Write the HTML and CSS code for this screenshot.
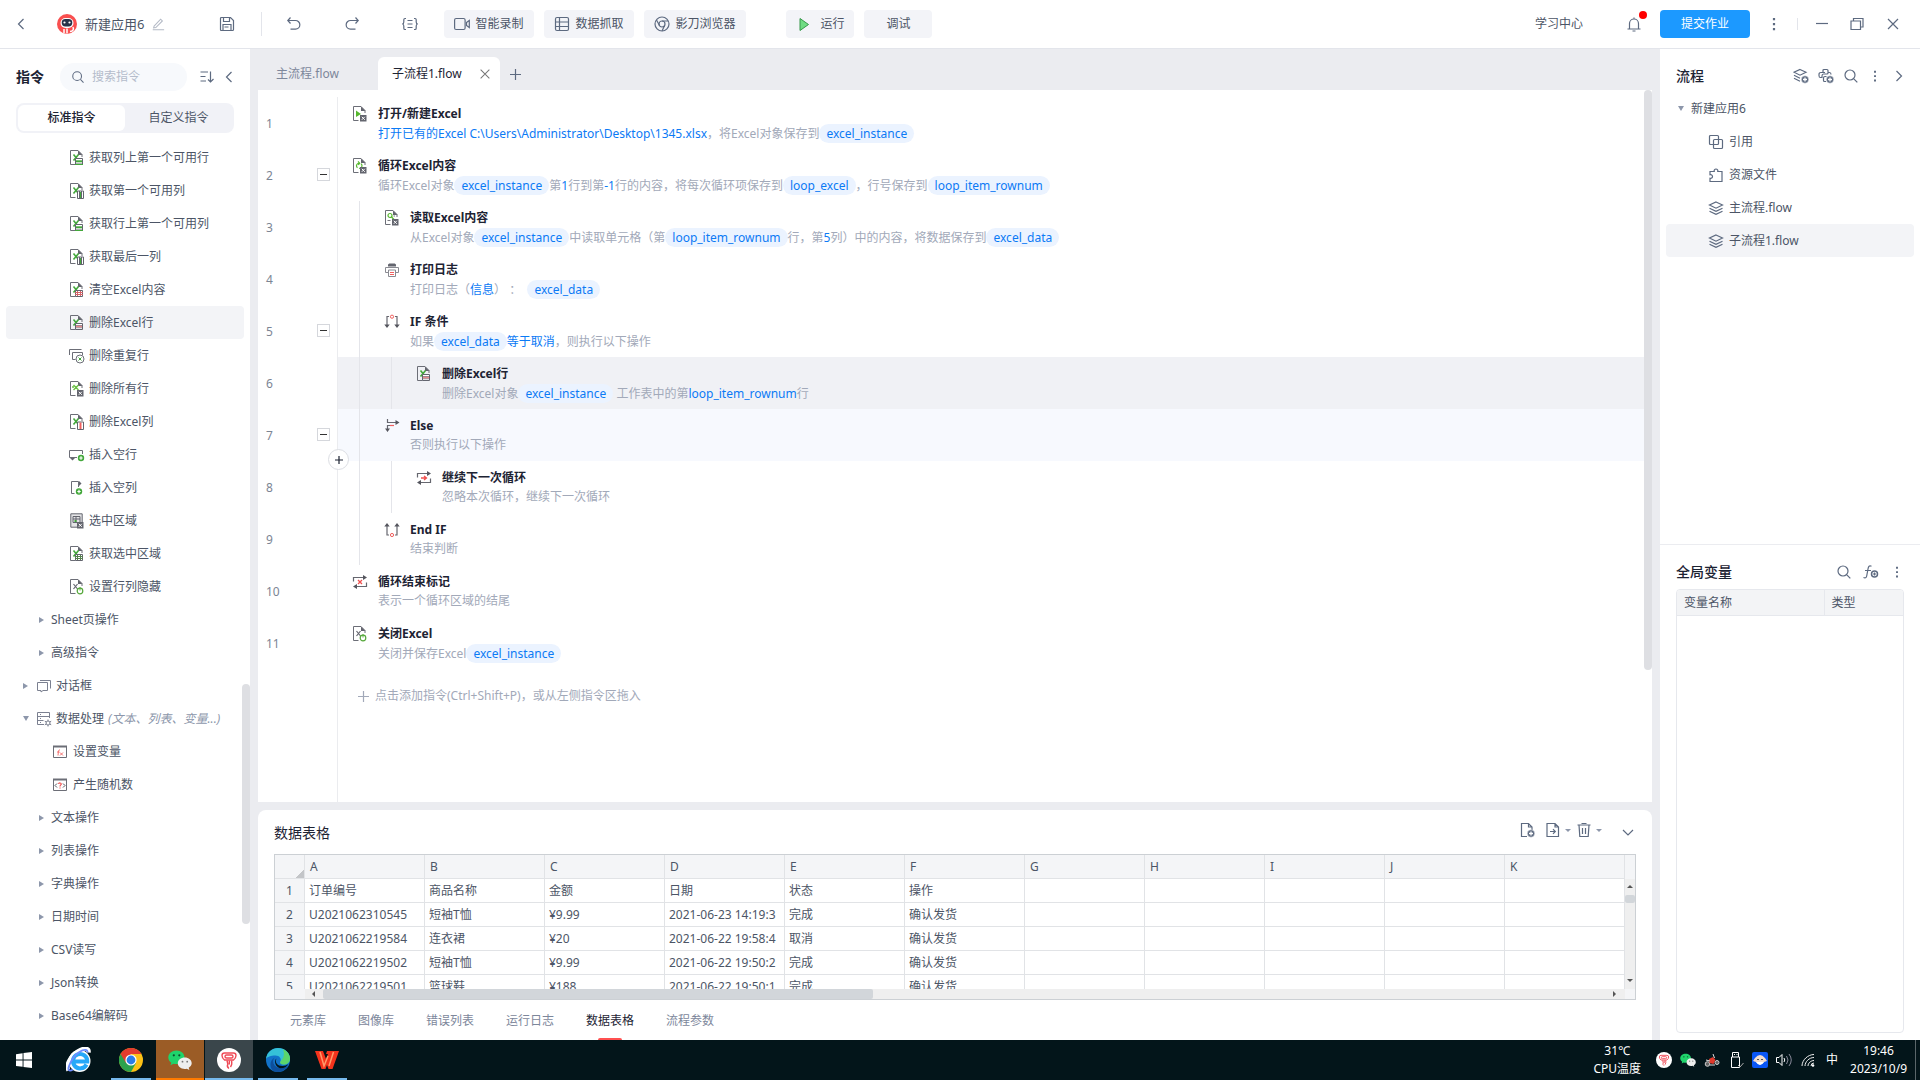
FILE: index.html
```html
<!DOCTYPE html>
<html lang="zh-CN">
<head>
  <meta charset="UTF-8" />
  <meta name="viewport" content="width=device-width, initial-scale=1.0"/>
  <title>新建应用6</title>
  <link rel="stylesheet" href="styles.css">
</head>
<body>
  <!-- Icon sprite -->
  <svg class="sprite" aria-hidden="true">
    <!-- excel documents, 14x16 -->
    <symbol id="doc" viewBox="0 0 14 16"><path d="M5.500 14.500H.5v-14H8l4 4V7" fill="none" stroke="#6c6e77"/><path d="M8 .5V5h4.500z" fill="#63656e"/></symbol>
    <symbol id="xl" viewBox="0 0 14 16"><use href="#doc"/><path d="M3.500 4.500l5 6M8.500 4.500l-5 6" stroke="#43a83b" stroke-width="1.600"/></symbol>
    <symbol id="xl-row" viewBox="0 0 14 16"><use href="#xl"/><path d="M5.500 8.500h7v5.500h-7z" fill="#fff" stroke="#63656e"/><path d="M6 11.300h6" stroke="#43a83b" stroke-width="2"/><path d="M5 14.500h8" stroke="#43a83b"/></symbol>
    <symbol id="xl-col" viewBox="0 0 14 16"><use href="#xl"/><path d="M7.500 8h6v7.500h-6zM9.500 8v7.500M11.500 8v7.500" fill="#fff" stroke="#63656e"/><path d="M10.500 9v6" stroke="#43a83b"/></symbol>
    <symbol id="xl-clear" viewBox="0 0 14 16"><use href="#xl"/><path d="M5.500 8.500h7v6h-7z" fill="#fff" stroke="#63656e"/><path d="M5 10.500h8M5 12.500h8M7.500 9v5M10.500 9v5" stroke="#d5656b"/></symbol>
    <symbol id="xl-delrow" viewBox="0 0 14 16"><use href="#xl"/><path d="M5.500 8.500h7v6h-7z" fill="#fff" stroke="#63656e"/><path d="M6 11.500h6" stroke="#e88a8c" stroke-width="2"/><path d="M5 10.500h8M5 12.800h8" stroke="#63656e" stroke-width=".6"/></symbol>
    <symbol id="xl-delcol" viewBox="0 0 14 16"><use href="#xl"/><path d="M7.500 8h6v7.500h-6z" fill="#fff" stroke="#63656e"/><path d="M10.500 8.500v6.500" stroke="#f0605f" stroke-width="2"/></symbol>
    <symbol id="xl-area" viewBox="0 0 14 16"><use href="#xl"/><path d="M5.500 8.500h7v6h-7z" fill="#fff" stroke="#63656e"/><path d="M5 10.500h8M5 12.500h8M7.500 9v5M10.500 9v5" stroke="#55814e"/></symbol>
    <symbol id="badge" viewBox="0 0 14 16"><path d="M7 9h6.500v6.500H7z" fill="#63656e"/><path d="M8.800 10.800l3 3M11.800 10.800l-3 3" stroke="#fff"/></symbol>
    <symbol id="xl-delall" viewBox="0 0 14 16"><use href="#doc"/><path d="M3.500 4l5 5M8.500 4l-5 5M2 6h2" stroke="#6bc046" stroke-width="1.400"/><use href="#badge"/></symbol>
    <symbol id="xl-open" viewBox="0 0 14 16"><use href="#doc"/><path d="M3 4.500l5 3.500-5 3z" fill="#56b82e"/><use href="#badge"/></symbol>
    <symbol id="xl-loop" viewBox="0 0 14 16"><use href="#doc"/><path d="M4.500 9.800a2.500 2.500 0 0 1 .5-4.300l1.500-.3M5 3.500l1.700 1.700L5.300 7M8 5.700a2.500 2.500 0 0 1-.5 4.300l-1.500.3" fill="none" stroke="#56b82e" stroke-width="1.200"/><use href="#badge"/></symbol>
    <symbol id="xl-read" viewBox="0 0 14 16"><use href="#doc"/><circle cx="5" cy="5.500" r="2" fill="none" stroke="#56b82e" stroke-width="1.200"/><path d="M6.500 7L9 9.500" stroke="#56b82e" stroke-width="1.200"/><path d="M2.500 10.500h3M8.500 6H10" stroke="#77787f"/><use href="#badge"/></symbol>
    <symbol id="xl-power" viewBox="0 0 14 16"><use href="#doc"/><path d="M3.500 5l4 5M7.500 5l-4 5" stroke="#63656e" stroke-width="1.200"/><circle cx="10" cy="12" r="2.800" fill="#fff" stroke="#56a83b" stroke-width="1.200"/><path d="M10 8v3.500" stroke="#56a83b"/></symbol>
    <symbol id="xl-select" viewBox="0 0 14 16"><path d="M.8.800h11.400v13.400H.8z" fill="#e4e4e6" stroke="#63656e"/><path d="M3 3.500h7v6H3zM3 6h7M6 3.500v6" fill="none" stroke="#63656e"/><path d="M4.500 7h2v2h-2z" fill="#43a83b"/><use href="#badge"/></symbol>
    <symbol id="xl-dup" viewBox="0 0 16 16"><path d="M.5 7V1.500h12M6.500 11.500H3.500v-7h10V7" fill="none" stroke="#6c6e77"/><circle cx="11" cy="11" r="4" fill="#fff" stroke="#6c6e77"/><path d="M9.500 9.500l3 3M12.500 9.500l-3 3" stroke="#43a83b"/></symbol>
    <symbol id="ins-row" viewBox="0 0 16 16"><path d="M8 10.500H.5v-7h13V7" fill="none" stroke="#6c6e77"/><path d="M1 11h5l-2.500 2.500z" fill="#63656e"/><circle cx="12" cy="11" r="3.200" fill="#43a83b"/><path d="M12 9.300v3.400M10.300 11h3.400" stroke="#fff" stroke-width="1.200"/></symbol>
    <symbol id="ins-col" viewBox="0 0 16 16"><path d="M5.500 13.500h-3v-12h7V7" fill="none" stroke="#6c6e77"/><path d="M10 1l2.500 2.500L10 6z" fill="#63656e"/><circle cx="10" cy="11.500" r="3.200" fill="#43a83b"/><path d="M10 9.800v3.400M8.300 11.500h3.400" stroke="#fff" stroke-width="1.200"/></symbol>
    <!-- flow commands -->
    <symbol id="printer" viewBox="0 0 16 16"><path d="M4 4.500V3C4 2 5 1.500 6 1.500h4c1 0 2 .5 2 1.500v1.500z" fill="#63656e"/><path d="M4 10.500H1.500v-5h13v5H12" fill="none" stroke="#8a8b92"/><path d="M4.500 8h7v6.500h-7z" fill="#fff" stroke="#8a8b92"/><path d="M6 10.500h4M6 12.500h4" stroke="#f0605f"/></symbol>
    <symbol id="if" viewBox="0 0 16 16"><path d="M5 2.500H3V11M11 2.500h2V11" fill="none" stroke="#66676f" stroke-width="1.200"/><path d="M.3 10.500h5.400L3 14zM10.300 10.500h5.400L13 14z" fill="#55565e"/><circle cx="8" cy="2.700" r="1.600" fill="none" stroke="#f0605f"/></symbol>
    <symbol id="endif" viewBox="0 0 16 16"><path d="M5 13H3V4M11 13h2V4" fill="none" stroke="#66676f" stroke-width="1.200"/><path d="M.3 4.500h5.400L3 1zM10.300 4.500h5.400L13 1z" fill="#55565e"/><circle cx="8" cy="13" r="1.600" fill="none" stroke="#f0605f"/></symbol>
    <symbol id="else" viewBox="0 0 16 16"><path d="M3.500 1v3.500h9M6 7.500H3.500V12" fill="none" stroke="#66676f" stroke-width="1.200"/><path d="M11.500 2l4 2.500-4 2.500zM1 10.500h5L3.500 14z" fill="#55565e"/><path d="M6 7.500h4" stroke="#f0605f" stroke-width="1.200"/></symbol>
    <symbol id="loop" viewBox="0 0 16 16"><path d="M1.500 7.500v-4h10M14.500 8.500v4h-10" fill="none" stroke="#66676f" stroke-width="1.200"/><path d="M11 1l4 2.500L11 6zM5 10l-4 2.500L5 15z" fill="#55565e"/></symbol>
    <symbol id="next" viewBox="0 0 16 16"><use href="#loop"/><path d="M5 8h5M8 6l2.500 2L8 10" fill="none" stroke="#f0504f" stroke-width="1.300"/></symbol>
    <symbol id="endloop" viewBox="0 0 16 16"><use href="#loop"/><path d="M6 6l4 4M10 6l-4 4" stroke="#f0504f" stroke-width="1.300"/></symbol>
    <symbol id="dialog" viewBox="0 0 16 16"><path d="M1.500 4.500h10v8H7l-2 1.500v-1.500H1.500zM4 2.500h10.500v8" fill="none" stroke="#7b8090"/></symbol>
    <symbol id="data" viewBox="0 0 16 16"><path d="M8 13.500H1.500v-12h12V7M1.500 5.500h12M1.500 9.500h6M4 3.500h1M4 7.500h1M4 11.500h1" fill="none" stroke="#7b8090"/><circle cx="12" cy="12" r="2" fill="#fff" stroke="#7b8090"/><path d="M12 8.500V10M12 14v1.500M8.800 10.200l1.500.8M13.800 13l1.400.8M8.800 13.800l1.500-.8M13.800 11l1.400-.8" stroke="#7b8090"/></symbol>
    <symbol id="setvar" viewBox="0 0 16 16"><path d="M1.500 2.500h13v11h-13z" fill="none" stroke="#6c6e77"/><path d="M1 2.500h14" stroke="#6c6e77" stroke-width="2"/><path d="M8 6c-1.500-.5-1.500 1-2 5.500M5 8h2.500M8 8.500l3 3M11 8.500l-3 3" fill="none" stroke="#f0605f" stroke-width=".9"/></symbol>
    <symbol id="random" viewBox="0 0 16 16"><path d="M1.500 2.500h13v11h-13z" fill="none" stroke="#6c6e77"/><path d="M1 2.500h14" stroke="#6c6e77" stroke-width="2"/><path d="M5 6.500L3 8.500l2 2M11 6.500l2 2-2 2" fill="none" stroke="#55565e"/><path d="M6.500 7c.3-1.500 3-1.300 2.700.3C9 8 8 8 8 9.500M8 10.500v1" fill="none" stroke="#f0504f" stroke-width="1.200"/></symbol>
    <!-- line icons -->
    <symbol id="left" viewBox="0 0 16 16"><path d="M10.500 3L5.500 8l5 5"/></symbol>
    <symbol id="right" viewBox="0 0 16 16"><path d="M5.500 3l5 5-5 5"/></symbol>
    <symbol id="down" viewBox="0 0 16 16"><path d="M3 6l5 5 5-5"/></symbol>
    <symbol id="plus" viewBox="0 0 16 16"><path d="M8.500 3v11M3 8.500h11"/></symbol>
    <symbol id="plus-sm" viewBox="0 0 16 16"><path d="M8 4v8M4 8h8"/></symbol>
    <symbol id="close" viewBox="0 0 16 16"><path d="M3 3l10 10M13 3L3 13"/></symbol>
    <symbol id="search" viewBox="0 0 16 16"><circle cx="7" cy="7" r="5"/><path d="M10.800 10.800l3.500 3.500"/></symbol>
    <symbol id="more" viewBox="0 0 16 16"><path d="M8 2v2.200M8 7v2.200M8 12v2.200" stroke-width="2.200"/></symbol>
    <symbol id="edit" viewBox="0 0 16 16"><path d="M3.500 10.500l7.500-8 2 2-7.500 7.500-2.500.5zM2 14.500h13"/></symbol>
    <symbol id="save" viewBox="0 0 16 16"><path d="M1.500 2.500q0-1 1-1h9l3 3v9q0 1-1 1h-11q-1 0-1-1zM4.500 1.500v4h6v-4M4 14.500v-6h8v6M5.500 11h4"/></symbol>
    <symbol id="undo" viewBox="0 0 16 16"><path d="M4.500 1.500L1.800 4.500l2.700 3M2 4.500h7.500a4.300 4.300 0 0 1 0 8.700H4.500"/></symbol>
    <symbol id="redo" viewBox="0 0 16 16"><path d="M11.500 1.500l2.700 3-2.700 3M14 4.500H6.500a4.300 4.300 0 0 0 0 8.700h5"/></symbol>
    <symbol id="braces" viewBox="0 0 18 16"><path d="M5 2.500H4q-1.200 0-1.200 1.300V6q0 2-1.600 2 1.600 0 1.600 2v2.200q0 1.300 1.200 1.300h1M13 2.500h1q1.200 0 1.200 1.300V6q0 2 1.600 2-1.600 0-1.600 2v2.200q0 1.300-1.200 1.300h-1M6.500 4.500h5M6.500 8h5M6.500 11.500h5"/></symbol>
    <symbol id="video" viewBox="0 0 16 16"><rect x=".6" y="2.500" width="10.500" height="11" rx="1.500"/><path d="M12.500 6.500l2.800-2v7l-2.800-2z"/></symbol>
    <symbol id="grid" viewBox="0 0 16 16"><rect x="1.500" y="1.500" width="13" height="13" rx="1.500"/><path d="M5.500 1.500v13M1.500 6h13M1.500 10.500h13"/></symbol>
    <symbol id="browser" viewBox="0 0 16 16"><circle cx="8" cy="8" r="7"/><circle cx="8" cy="8" r="3"/><path d="M2.500 4l3 5.500M14 5H8M10.600 9.500L8 15"/></symbol>
    <symbol id="bell" viewBox="0 0 16 16"><path d="M1.500 13h13M3.500 13V7.500a4.500 4.500 0 0 1 9 0V13M8 3V1.500M6.500 15h3"/></symbol>
    <symbol id="restore" viewBox="0 0 16 16"><path d="M2 5h9.500v8.500H2zM4.500 5V2.500H14V11h-2.500"/></symbol>
    <symbol id="sort" viewBox="0 0 16 16"><path d="M1.500 3H9M1.500 7.500h5M1.500 12H7M11.500 2.500V13M9 10.500l2.500 2.500 3-3"/></symbol>
    <symbol id="layers" viewBox="0 0 16 16"><path d="M8 2l6.500 3L8 8.200 1.500 5zM1.500 8.200L8 11.400l6.500-3.200M1.500 11.200L8 14.400l6.500-3.200"/></symbol>
    <symbol id="dot-plus" viewBox="0 0 16 16"><circle cx="12" cy="11.500" r="3.700" fill="#5d6a80" stroke="#fff" stroke-width=".5"/><path d="M12 9.500v4M10 11.500h4" stroke="#fff" stroke-width="1.300"/></symbol>
    <symbol id="layers-add" viewBox="0 0 16 16"><path d="M7 1.500l6 2.700-6 3-6-3zM1 7.200l6 3M1 10.200l6 3"/><use href="#dot-plus"/></symbol>
    <symbol id="python-add" viewBox="0 0 16 16"><path d="M5 4V2.500q0-1 1-1h3q1 0 1 1V5q0 1-1 1H5.500Q4 6 4 8v1.500H2.500q-1.500 0-1.500-2v-1q0-2 2-2h4M10 4.500h1.500q1.500 0 1.500 2M8.500 8.500H7q-1.500 0-1.500 1.500v2.500q0 1 1 1H8"/><use href="#dot-plus"/></symbol>
    <symbol id="quote" viewBox="0 0 16 16"><rect x="1.500" y="1.500" width="9" height="9" rx="1"/><rect x="5.500" y="5.500" width="9" height="9" rx="1"/></symbol>
    <symbol id="puzzle" viewBox="0 0 16 16"><path d="M2 4.500h4.200a1.900 1.900 0 1 1 3.600 0H14v10H2v-3.200a1.900 1.900 0 1 0 0-3.600z"/></symbol>
    <symbol id="fx" viewBox="0 0 18 16"><path d="M9.500 2.200C7 .8 6.300 3 5.800 6L4.700 12c-.4 2-1.700 2.300-3.200 1.500M3 6.500h6"/><circle cx="12.500" cy="10" r="3" stroke-width="1.500"/><path d="M12.500 8.500v3M11 10h3"/></symbol>
    <symbol id="file-add" viewBox="0 0 16 16"><path d="M8 14.500H2.500v-13h7l3.500 3.500v3M9.500 1.500V5H13"/><use href="#dot-plus"/></symbol>
    <symbol id="file-out" viewBox="0 0 16 16"><path d="M2 1.500h8l3.500 3.500v9.500H2zM10 1.500V5h3.500M5 9.500h5M8 7.200l2.300 2.300L8 11.800"/></symbol>
    <symbol id="trash" viewBox="0 0 16 16"><path d="M1.500 3h13M5.500 1.500h5M3 3l.8 11.500h8.400L13 3M6.500 6v6M9.500 6v6"/></symbol>
    <!-- taskbar -->
    <symbol id="robot" viewBox="0 0 24 24"><circle cx="12" cy="12" r="12" fill="#fff"/><path d="M7.500 5h9q2.500 0 2.500 2.500T16.500 12h-9Q5 10 5 7.500T7.500 5z" fill="none" stroke="#ef4b57" stroke-width="1.400"/><rect x="8" y="7" width="8" height="3" rx="1.500" fill="none" stroke="#ef4b57" stroke-width="1.400"/><path d="M10 12.500l.8 3.500q-1.300 3 1.200 4.500M14.500 12.500q1 4-1 6.500M12.300 12.500v4" fill="none" stroke="#ef4b57" stroke-width="1.400"/></symbol>
    <symbol id="wechat" viewBox="0 0 24 24"><path d="M8.500 2.500C4 2.500.3 5.500.3 9.500c0 2.200 1.200 4 3 5.300l-.8 2.500 3-1.500c5.500 1.200 11-1.500 11-6.300 0-4-3.500-7-8-7z" fill="#1fd46b"/><circle cx="5.800" cy="7.300" r="1.100" fill="#0b4e2b"/><circle cx="11.300" cy="7.300" r="1.100" fill="#0b4e2b"/><path d="M16.800 9.500c-4 0-7 2.600-7 5.800 0 4 4.500 6.500 9 5.400l2.600 1.300-.7-2.200c1.800-1.100 3-2.600 3-4.500 0-3.200-3-5.800-6.900-5.800z" fill="#eee"/><circle cx="14.500" cy="13.700" r=".9" fill="#777"/><circle cx="19.200" cy="13.700" r=".9" fill="#777"/></symbol>
  </svg>

  <header class="topbar">
    <button class="icon-btn back" aria-label="返回"><svg class="line s16"><use href="#left"/></svg></button>
    <svg class="app-logo" viewBox="0 0 20 20"><circle cx="10" cy="10" r="10" fill="#f94f4f"/><rect x="3.500" y="4" width="13" height="10" rx="5" fill="#fff"/><rect x="4.700" y="5" width="10.600" height="7.500" rx="3.700" fill="#26334a"/><circle cx="7.500" cy="8.500" r="1.100" fill="#fff"/><circle cx="12.500" cy="8.500" r="1.100" fill="#fff"/><path d="M7 15v4M10 14.500v5M16 13q1.500 4-3 4.500" stroke="#fff" stroke-width="1.500" fill="none"/></svg>
    <h1>新建应用6</h1>
    <button class="icon-btn edit" aria-label="重命名"><svg class="line s14 pale"><use href="#edit"/></svg></button>
    <button class="icon-btn save" aria-label="保存"><svg class="line s16"><use href="#save"/></svg></button>
    <span class="divider tall"></span>
    <button class="icon-btn undo" aria-label="撤销"><svg class="line s16"><use href="#undo"/></svg></button>
    <button class="icon-btn redo" aria-label="重做"><svg class="line s16"><use href="#redo"/></svg></button>
    <button class="icon-btn braces" aria-label="代码"><svg class="line s18"><use href="#braces"/></svg></button>
    <div class="tools">
      <button class="tool"><svg class="line s16"><use href="#video"/></svg>智能录制</button>
      <button class="tool"><svg class="line s16"><use href="#grid"/></svg>数据抓取</button>
      <button class="tool"><svg class="line s16"><use href="#browser"/></svg>影刀浏览器</button>
    </div>
    <div class="tools run">
      <button class="tool"><svg class="s16" viewBox="0 0 16 16"><path d="M4 2.500l8.500 6L4 14.500z" fill="#6fdc83" stroke="#36984a"/></svg>运行</button>
      <button class="tool">调试</button>
    </div>
    <a class="learn" href="#">学习中心</a>
    <button class="icon-btn bell" aria-label="通知"><svg class="line s16"><use href="#bell"/></svg><span class="dot"></span></button>
    <button class="submit">提交作业</button>
    <button class="icon-btn more" aria-label="更多"><svg class="line s16"><use href="#more"/></svg></button>
    <span class="divider"></span>
    <div class="window-btns">
      <button class="icon-btn" aria-label="最小化"><svg class="line s14" viewBox="0 0 14 14"><path d="M1 6.500h12"/></svg></button>
      <button class="icon-btn" aria-label="还原"><svg class="line s16"><use href="#restore"/></svg></button>
      <button class="icon-btn" aria-label="关闭"><svg class="line s16"><use href="#close"/></svg></button>
    </div>
  </header>

  <div class="workspace">
    <aside class="commands">
      <div class="commands-head">
        <h2>指令</h2>
        <label class="search"><svg class="line s14"><use href="#search"/></svg><input type="text" placeholder="搜索指令" aria-label="搜索指令"></label>
        <button class="icon-btn" aria-label="排序"><svg class="line s16"><use href="#sort"/></svg></button>
        <button class="icon-btn" aria-label="收起"><svg class="line s16"><use href="#left"/></svg></button>
      </div>
      <div class="segment">
        <button class="active">标准指令</button>
        <button>自定义指令</button>
      </div>
      <ul class="tree">
        <li class="leaf"><svg><use href="#xl-row"/></svg>获取列上第一个可用行</li>
        <li class="leaf"><svg><use href="#xl-col"/></svg>获取第一个可用列</li>
        <li class="leaf"><svg><use href="#xl-row"/></svg>获取行上第一个可用列</li>
        <li class="leaf"><svg><use href="#xl-col"/></svg>获取最后一列</li>
        <li class="leaf"><svg><use href="#xl-clear"/></svg>清空Excel内容</li>
        <li class="leaf selected"><svg><use href="#xl-delrow"/></svg>删除Excel行</li>
        <li class="leaf"><svg><use href="#xl-dup"/></svg>删除重复行</li>
        <li class="leaf"><svg><use href="#xl-delall"/></svg>删除所有行</li>
        <li class="leaf"><svg><use href="#xl-delcol"/></svg>删除Excel列</li>
        <li class="leaf"><svg><use href="#ins-row"/></svg>插入空行</li>
        <li class="leaf"><svg><use href="#ins-col"/></svg>插入空列</li>
        <li class="leaf"><svg><use href="#xl-select"/></svg>选中区域</li>
        <li class="leaf"><svg><use href="#xl-area"/></svg>获取选中区域</li>
        <li class="leaf"><svg><use href="#xl-power"/></svg>设置行列隐藏</li>
        <li class="group">Sheet页操作</li>
        <li class="group">高级指令</li>
        <li class="root"><svg><use href="#dialog"/></svg>对话框</li>
        <li class="root open"><svg><use href="#data"/></svg>数据处理<em>(文本、列表、变量...)</em></li>
        <li class="item"><svg><use href="#setvar"/></svg>设置变量</li>
        <li class="item"><svg><use href="#random"/></svg>产生随机数</li>
        <li class="group">文本操作</li>
        <li class="group">列表操作</li>
        <li class="group">字典操作</li>
        <li class="group">日期时间</li>
        <li class="group">CSV读写</li>
        <li class="group">Json转换</li>
        <li class="group">Base64编解码</li>
      </ul>
      <span class="side-thumb"></span>
    </aside>

    <main class="center">
      <nav class="tabs">
        <button class="tab">主流程.flow</button>
        <button class="tab active">子流程1.flow<svg class="line s14"><use href="#close"/></svg></button>
        <button class="icon-btn" aria-label="新建流程"><svg class="line s16"><use href="#plus"/></svg></button>
      </nav>

      <section class="canvas">
        <div class="flow">
          <div class="step">
            <div class="gutter">1</div>
            <svg><use href="#xl-open"/></svg>
            <div class="text"><h3>打开/新建Excel</h3><p class="wide"><b>打开已有的Excel C:\Users\Administrator\Desktop\1345.xlsx</b>，将Excel对象保存到<span class="chip">excel_instance</span></p></div>
          </div>
          <div class="step">
            <div class="gutter">2<button class="fold" aria-label="折叠"></button></div>
            <svg><use href="#xl-loop"/></svg>
            <div class="text"><h3>循环Excel内容</h3><p class="wide">循环Excel对象<span class="chip">excel_instance</span>第<b>1</b>行到第<b>-1</b>行的内容，将每次循环项保存到<span class="chip">loop_excel</span>，行号保存到<span class="chip">loop_item_rownum</span></p></div>
          </div>
          <div class="step">
            <div class="gutter">3</div><i class="guide"></i>
            <svg><use href="#xl-read"/></svg>
            <div class="text"><h3>读取Excel内容</h3><p class="wide">从Excel对象<span class="chip">excel_instance</span>中读取单元格（第<span class="chip">loop_item_rownum</span>行，第<b>5</b>列）中的内容，将数据保存到<span class="chip">excel_data</span></p></div>
          </div>
          <div class="step">
            <div class="gutter">4</div><i class="guide"></i>
            <svg><use href="#printer"/></svg>
            <div class="text"><h3>打印日志</h3><p class="wide">打印日志（<b>信息</b>） ：  <span class="chip">excel_data</span></p></div>
          </div>
          <div class="step">
            <div class="gutter">5<button class="fold" aria-label="折叠"></button></div><i class="guide"></i>
            <svg><use href="#if"/></svg>
            <div class="text"><h3>IF 条件</h3><p class="wide">如果<span class="chip">excel_data</span><b>等于取消</b>，则执行以下操作</p></div>
          </div>
          <div class="step selected">
            <div class="gutter">6</div><i class="guide"></i><i class="guide"></i>
            <svg><use href="#xl-delrow"/></svg>
            <div class="text"><h3>删除Excel行</h3><p class="wide">删除Excel对象<span class="chip">excel_instance</span> 工作表中的第<b>loop_item_rownum</b>行</p></div>
          </div>
          <div class="step hover">
            <div class="gutter">7<button class="fold" aria-label="折叠"></button></div><i class="guide"></i>
            <svg><use href="#else"/></svg>
            <div class="text"><h3>Else</h3><p>否则执行以下操作</p></div>
            <button class="insert" aria-label="插入指令"><svg class="line s16"><use href="#plus-sm"/></svg></button>
          </div>
          <div class="step">
            <div class="gutter">8</div><i class="guide"></i><i class="guide"></i>
            <svg><use href="#next"/></svg>
            <div class="text"><h3>继续下一次循环</h3><p>忽略本次循环，继续下一次循环</p></div>
          </div>
          <div class="step">
            <div class="gutter">9</div><i class="guide"></i>
            <svg><use href="#endif"/></svg>
            <div class="text"><h3>End IF</h3><p>结束判断</p></div>
          </div>
          <div class="step">
            <div class="gutter">10</div>
            <svg><use href="#endloop"/></svg>
            <div class="text"><h3>循环结束标记</h3><p>表示一个循环区域的结尾</p></div>
          </div>
          <div class="step">
            <div class="gutter">11</div>
            <svg><use href="#xl-power"/></svg>
            <div class="text"><h3>关闭Excel</h3><p class="wide">关闭并保存Excel<span class="chip">excel_instance</span></p></div>
          </div>
          <div class="step rest">
            <div class="gutter"></div>
            <button class="add"><svg class="line s16"><use href="#plus"/></svg>点击添加指令(Ctrl+Shift+P)，或从左侧指令区拖入</button>
          </div>
        </div>
        <div class="canvas-scroll"></div>
      </section>

      <section class="panel">
        <div class="panel-head">
          <h2>数据表格</h2>
          <button class="icon-btn" aria-label="新增"><svg class="line s16"><use href="#file-add"/></svg></button>
          <button class="icon-btn drop" aria-label="导出"><svg class="line s16"><use href="#file-out"/></svg></button>
          <button class="icon-btn drop" aria-label="清空"><svg class="line s16"><use href="#trash"/></svg></button>
          <button class="icon-btn fold-panel" aria-label="收起"><svg class="line s16"><use href="#down"/></svg></button>
        </div>
        <div class="sheet">
          <div class="sheet-body">
            <table>
              <thead>
                <tr><th class="corner"></th><th>A</th><th>B</th><th>C</th><th>D</th><th>E</th><th>F</th><th>G</th><th>H</th><th>I</th><th>J</th><th>K</th></tr>
              </thead>
              <tbody>
                <tr><th>1</th><td>订单编号</td><td>商品名称</td><td>金额</td><td>日期</td><td>状态</td><td>操作</td><td></td><td></td><td></td><td></td><td></td></tr>
                <tr><th>2</th><td>U2021062310545</td><td>短袖T恤</td><td>¥9.99</td><td>2021-06-23 14:19:3</td><td>完成</td><td>确认发货</td><td></td><td></td><td></td><td></td><td></td></tr>
                <tr><th>3</th><td>U2021062219584</td><td>连衣裙</td><td>¥20</td><td>2021-06-22 19:58:4</td><td>取消</td><td>确认发货</td><td></td><td></td><td></td><td></td><td></td></tr>
                <tr><th>4</th><td>U2021062219502</td><td>短袖T恤</td><td>¥9.99</td><td>2021-06-22 19:50:2</td><td>完成</td><td>确认发货</td><td></td><td></td><td></td><td></td><td></td></tr>
                <tr><th>5</th><td>U2021062219501</td><td>篮球鞋</td><td>¥188</td><td>2021-06-22 19:50:1</td><td>完成</td><td>确认发货</td><td></td><td></td><td></td><td></td><td></td></tr>
              </tbody>
            </table>
          </div>
          <div class="vscroll"><i class="arrow up"></i><span class="thumb"></span><i class="arrow dn"></i></div>
          <div class="hscroll"><i class="arrow lt"></i><span class="thumb"></span><i class="arrow rt"></i></div>
        </div>
        <nav class="panel-tabs">
          <button>元素库</button>
          <button>图像库</button>
          <button>错误列表</button>
          <button>运行日志</button>
          <button class="active">数据表格</button>
          <button>流程参数</button>
        </nav>
      </section>
    </main>

    <aside class="right">
      <section class="files">
        <div class="right-head">
          <h2>流程</h2>
          <button class="icon-btn" aria-label="新建流程"><svg class="line s16"><use href="#layers-add"/></svg></button>
          <button class="icon-btn" aria-label="新建代码"><svg class="line s16"><use href="#python-add"/></svg></button>
          <button class="icon-btn" aria-label="搜索"><svg class="line s16"><use href="#search"/></svg></button>
          <button class="icon-btn" aria-label="更多"><svg class="line s14"><use href="#more"/></svg></button>
          <button class="icon-btn" aria-label="收起"><svg class="line s16"><use href="#right"/></svg></button>
        </div>
        <ul class="tree">
          <li class="project open">新建应用6</li>
          <li class="file"><svg class="line"><use href="#quote"/></svg>引用</li>
          <li class="file"><svg class="line"><use href="#puzzle"/></svg>资源文件</li>
          <li class="file"><svg class="line"><use href="#layers"/></svg>主流程.flow</li>
          <li class="file selected"><svg class="line"><use href="#layers"/></svg>子流程1.flow</li>
        </ul>
      </section>
      <section class="vars">
        <div class="right-head">
          <h2>全局变量</h2>
          <button class="icon-btn" aria-label="搜索"><svg class="line s16"><use href="#search"/></svg></button>
          <button class="icon-btn" aria-label="新建变量"><svg class="line s18"><use href="#fx"/></svg></button>
          <button class="icon-btn" aria-label="更多"><svg class="line s14"><use href="#more"/></svg></button>
        </div>
        <div class="var-box">
          <table>
            <thead><tr><th>变量名称</th><th>类型</th></tr></thead>
          </table>
        </div>
      </section>
    </aside>
  </div>

  <footer class="taskbar">
    <button class="app start" aria-label="开始"><svg class="s16" viewBox="0 0 16 16"><path d="M0 2.200l6.600-1v6.300H0zM7.500 1L16 0v7.500H7.500zM0 8.500h6.600v6.300L0 14zM7.500 8.500H16V16l-8.500-1z" fill="#fff"/></svg></button>
    <button class="app ie" aria-label="IE"><svg class="s26" viewBox="0 0 26 26"><path d="M2.500 23C-1 19 5 9 12 4.500s11-3 10.500 1" fill="none" stroke="#fff" stroke-width="4.500"/><circle cx="13.500" cy="14" r="11" fill="#fff"/><path d="M20.500 17.500a7.200 7.200 0 1 1 .8-3H8" fill="none" stroke="#27a8f8" stroke-width="4"/><path d="M7 22.500c-4 2.500-5.500.5-4-3.500S8 8.500 13 5.200s9-3 8.500.3" fill="none" stroke="#6d8dff" stroke-width="1.800"/></svg></button>
    <button class="app on" aria-label="Chrome"><svg class="s24" viewBox="0 0 24 24"><circle cx="12" cy="12" r="12" fill="#fbc116"/><path d="M12 12L1.600 6A12 12 0 0 0 12 24l5-9z" fill="#2ba24c"/><path d="M1.600 6a12 12 0 0 1 20.800 0H12L7 15z" fill="#e33b2e"/><circle cx="12" cy="12" r="5.600" fill="#fff"/><circle cx="12" cy="12" r="4.400" fill="#2a7de9"/></svg></button>
    <button class="app on alert" aria-label="微信"><svg class="s24"><use href="#wechat"/></svg></button>
    <button class="app on current" aria-label="影刀"><svg class="s24"><use href="#robot"/></svg></button>
    <button class="app on" aria-label="Edge"><svg class="s24" viewBox="0 0 24 24"><circle cx="12" cy="12" r="12" fill="#1273c9"/><path d="M0 11C1 4 6 0 12 0c7 0 12 5 12 10.500 0 4-3 6-6.500 6-3 0-4-1.500-3-3 1-3-1-6-5-6C5 7.500 1 9 0 11z" fill="#35c1d8"/><path d="M17 1.200c4.500 2 7 5.500 7 9.300 0 4-3 6-6.500 6-3 0-4-1.500-3-3 1.500-2 5-5 2.500-12.300z" fill="#5bd66b"/><path d="M9 9.500c-3.500 3-2 9 4 10.500 3.500.8 7-.5 9-2-3 5-9 7-13.500 5.500C3 21 3 12 9 9.500z" fill="#0d4f9c"/><path d="M10.500 10.500c-2 4 1 7.500 6 7.500 2.500 0 4.500-.8 6-2-1.500 3-5 4.500-8.500 4.200C9.500 19 7.500 13 10.500 10.500z" fill="#03151a"/></svg></button>
    <button class="app on" aria-label="WPS"><svg class="s24" viewBox="0 0 24 24"><path d="M0 3h8l3 8 2-5h-2l1-3h12l-6.500 18h-4L12 17l-1.500 4h-4z" fill="#f4331c"/><path d="M5 4l4 14 4-10M18.500 4l-4.500 14" fill="none" stroke="#ff9a6a" stroke-width="1.500"/></svg></button>

    <div class="tray">
      <div class="stat"><span>31℃</span><span>CPU温度</span></div>
      <svg class="s16"><use href="#robot"/></svg>
      <svg class="s16"><use href="#wechat"/></svg>
      <svg class="s16" viewBox="0 0 16 16"><circle cx="3.500" cy="12" r="2.300" fill="#666" stroke="#ccc"/><circle cx="13" cy="10.500" r="2" fill="#666" stroke="#ccc"/><path d="M5 7l4-2 2.500 3-2 4-4-1z" fill="#e0392b"/><path d="M9 2l1.500 4M2 8l4 1M6 13h5" stroke="#ddd"/></svg>
      <svg class="s16" viewBox="0 0 16 16" fill="none" stroke="#fff"><path d="M4.500 5V.5h6V5M3.500 5h8v10.500h-8zM6 2.500h1M8.500 2.500h1"/><path d="M10 13l2 2 3.500-4" stroke="#aaa"/></svg>
      <svg class="s16" viewBox="0 0 16 16"><rect width="16" height="16" rx="2" fill="#0a56f5"/><path d="M3 6q5-6 10 0l2 3-3 1q-4 5-8 0L1 9z" fill="#f3dccd"/><path d="M4 10q4 6 8 0z" fill="#fff"/><path d="M5 7.500h2M9 7.500h2" stroke="#555"/></svg>
      <svg class="s16" viewBox="0 0 16 16" fill="none" stroke="#fff"><path d="M.5 5.500H3l3-3v11l-3-3H.5zM8 6q1.500 2 0 4"/><path d="M10.500 4q3 4 0 8M13 2q4.500 6 0 12" stroke="#889"/></svg>
      <svg class="s16" viewBox="0 0 16 16" fill="none" stroke="#eee"><path d="M2 14C2 8 8 2.500 14 2.500M5 14c0-4 4-8.500 9-8.500M8 14c0-3 3-5.500 6-5.500M11 14q0-3 3-3"/><circle cx="13" cy="13.500" r="1.300" fill="#fff" stroke="none"/></svg>
      <span class="ime">中</span>
      <div class="stat clock"><span>19:46</span><span>2023/10/9</span></div>
      <span class="desktop"></span>
    </div>
  </footer>
</body>
</html>
```
FILE: styles.css
```css
*{margin:0;padding:0;box-sizing:border-box}
body{height:100vh;display:flex;flex-direction:column;overflow:hidden;font-family:"Noto Sans","Noto Sans CJK SC",sans-serif;font-size:12px;line-height:18px;color:#4c5566;background:#ebecf0}
button,input{font:inherit;color:inherit;border:none;background:none}
button{cursor:pointer;white-space:nowrap}
ul{list-style:none}
a{color:inherit;text-decoration:none}
svg{display:block;flex:none}
.sprite{position:absolute;width:0;height:0}
.line{fill:none;stroke:#5d6a80;stroke-width:1.2}
.pale{stroke:#b4bac6}
.s14{width:14px;height:14px}
.s16{width:16px;height:16px}
.s18{width:18px;height:16px}
.s24{width:24px;height:24px}
.s26{width:26px;height:26px}
.icon-btn{display:flex;align-items:center;justify-content:center;flex:none}
h2{font-size:14px;line-height:20px;font-weight:500;color:#1d2333}

/* top bar */
.topbar{height:49px;flex:none;display:flex;align-items:center;background:#fff;border-bottom:1px solid #e3e5eb;padding:0 19px 0 13px}
.app-logo{width:20px;height:20px;margin-left:28px}
.topbar h1{font-size:13px;font-weight:400;margin:0 7px 0 8px}
.save{margin-left:54px}
.divider{width:1px;height:12px;background:#e3e5eb}
.divider.tall{height:24px;margin-left:26px}
.undo{margin-left:24px}
.redo{margin-left:42px}
.braces{margin-left:41px}
.tools{display:flex;gap:10px;margin-left:25px}
.tools.run{margin-left:40px}
.tool{height:28px;display:flex;align-items:center;justify-content:center;gap:5px;padding:0 11px 0 10px;border-radius:4px;background:#f3f4f8}
.run .tool{width:68px;padding:0;gap:8px}
.learn{margin-left:auto}
.bell{position:relative;margin-left:43px}
.dot{position:absolute;top:-5px;right:-5px;width:8px;height:8px;border-radius:50%;background:#f00}
.submit{width:90px;height:28px;margin:0 16px 0 18px;border-radius:4px;background:#1c99ff;color:#fff}
.more{margin-right:15px}
.window-btns{display:flex;gap:20px;margin-left:17px}

/* layout */
.workspace{flex:1;min-height:0;display:flex;gap:8px}
.commands{position:relative;width:250px;flex:none;background:#fff;overflow:hidden}
.center{flex:1;min-width:0;display:flex;flex-direction:column}
.right{width:260px;flex:none;display:flex;flex-direction:column;background:#fff}

/* command list */
.commands-head{display:flex;align-items:center;padding:14px 13px 12px 16px}
.commands-head h2{font-weight:700;margin-right:16px}
.search{flex:1;min-width:0;height:28px;display:flex;align-items:center;gap:7px;padding:0 11px;margin-right:12px;border-radius:14px;background:#f7f9fc}
.search input{width:100%;min-width:0;outline:none}
.search input::placeholder{color:#b4bccb}
.commands-head .icon-btn + .icon-btn{margin-left:6px}
.segment{display:flex;height:30px;margin:0 16px 8px;padding:2px;border-radius:8px;background:#f1f2f7}
.segment button{flex:1;border-radius:6px}
.segment .active{background:#fff;color:#1d2333;font-weight:500}
.tree li{height:33px;display:flex;align-items:center;margin:0 6px;border-radius:4px;white-space:nowrap}
.tree svg{width:16px;height:16px}
.tree .selected{background:#f3f4f7}
.leaf{padding-left:63px;gap:4px}
.group,.project{gap:7px}
.group{padding-left:33px}
.root{padding-left:17px;gap:4px}
.item{padding-left:46px;gap:5px}
.root em{color:#8d97ab}
.group::before,.root::before,.project::before{content:"";border-left:5px solid #8d97ab;border-top:3px solid transparent;border-bottom:3px solid transparent}
.root::before{margin-right:4px}
.tree .open::before{border:3px solid transparent;border-top:5px solid #8d97ab;border-bottom:0}
.root.open::before{margin-right:3px}
.side-thumb{position:absolute;right:0;top:635px;width:8px;height:240px;border-radius:4px;background:#dedfe3}

/* tabs */
.tabs{display:flex;height:41px;padding-top:8px}
.tab{display:flex;align-items:center;padding:0 18px;color:#7d879b}
.tab.active{margin-left:21px;padding:0 8px 0 14px;gap:16px;border-radius:6px 6px 0 0;background:#fff;color:#1d2333}
.tab svg{stroke:#777}
.tabs .icon-btn{margin-left:7px}

/* flow canvas */
.canvas{flex:1;min-height:0;display:flex;background:#fff}
.flow{flex:1;min-width:0;display:flex;flex-direction:column;padding-top:7px}
.canvas-scroll{width:8px;height:580px;border-radius:4px;background:#dedfe3}
.step{position:relative;height:52px;flex:none;display:flex;white-space:nowrap}
.step > svg{width:16px;height:16px;margin:9px 10px 0 14px}
.step.rest{flex:1}
.step.selected{background:linear-gradient(#f0f1f5,#f0f1f5) 80px 0 no-repeat}
.step.hover{background:linear-gradient(#f7f9fe,#f7f9fe) 80px 0 no-repeat}
.gutter{width:80px;flex:none;display:flex;align-items:center;justify-content:space-between;padding:1px 7px 0 8px;border-right:1px solid #ebecef;color:#7c8594}
.fold{display:flex;align-items:center;justify-content:center;width:13px;height:13px;margin-bottom:2px;border:1px solid #d5d7dc}
.fold::before{content:"";width:7px;height:1px;background:#333}
.guide{width:11px;flex:none;margin-left:21px;border-left:1px solid #e4e5ea}
.text{padding-top:8px}
.text h3{font-size:12px;line-height:18px;font-weight:700;color:#1d2333}
.text p{line-height:20px;color:#a2a9b9}
.text p.wide{line-height:22px;white-space:pre}
.text b{font-weight:400;color:#0b7af5}
.chip{display:inline-block;padding:0 7px;line-height:19px;border-radius:10px;background:#ebf3ff;color:#0b7af5}
.insert{position:absolute;left:70px;bottom:-9px;width:21px;height:21px;display:flex;align-items:center;justify-content:center;border:1px solid #dcdee3;border-radius:50%;background:#fff;z-index:1}
.insert svg{stroke:#1d2333}
.add{display:flex;align-items:center;align-self:flex-start;gap:4px;height:54px;padding-left:17px;color:#a2a9b9}
.add svg{stroke:#a2a9b9}

/* data sheet */
.panel{margin-top:8px;padding:0 16px;border-radius:8px 8px 0 0;background:#fff}
.panel-head{display:flex;align-items:center;height:44px}
.panel-head h2{margin-right:auto;padding-top:2px;font-weight:400}
.panel-head .icon-btn{padding-bottom:4px}
.panel-head .icon-btn + .icon-btn{margin-left:10px}
.drop::after{content:"";margin-left:4px;border:3px solid transparent;border-top:3px solid #8d97ab;border-bottom:0}
.panel-head .drop + .drop{margin-left:5px}
.panel-head .fold-panel{margin-left:18px;padding-bottom:0}
.panel-head .icon-btn.fold-panel{margin-left:18px;padding-bottom:0}
.sheet{display:grid;grid-template-columns:1fr 10px;grid-template-rows:134px 10px;border:1px solid #ccd0d4;background:#f4f5f7}
.sheet-body{overflow:hidden;background:#fff}
.sheet table{width:100%;table-layout:fixed;border-collapse:separate;border-spacing:0}
.sheet th,.sheet td{height:24px;padding:0 4px;border-right:1px solid #e1e3e6;border-bottom:1px solid #e1e3e6;font-weight:400;line-height:18px;white-space:nowrap;overflow:hidden}
.sheet th{background:#f4f5f7}
.sheet thead th{text-align:left;padding-left:5px}
.sheet th.corner{width:30px;background:linear-gradient(135deg,transparent 50%,#c3c5c8 50%) right bottom/8px 8px no-repeat #f4f5f7}
.vscroll{margin-top:24px;display:flex;flex-direction:column;align-items:center;background:#efefef}
.vscroll .thumb{width:10px;height:8px;margin:7px 0 auto;background:#d2d6da;border-radius:2px}
.hscroll{margin-left:30px;display:flex;align-items:center;background:#efefef}
.hscroll .thumb{width:550px;height:10px;margin:0 auto 0 8px;background:#d2d6da;border-radius:2px}
.arrow{border:3px solid transparent}
.up{border-bottom-color:#555;margin-top:3px}
.dn{border-top-color:#555;margin-bottom:4px}
.lt{border-right-color:#555;margin-left:4px}
.rt{border-left-color:#555;margin-right:6px}
.panel-tabs{display:flex;gap:32px;height:40px;padding-left:16px}
.panel-tabs button{position:relative;padding-top:2px;color:#7d879b}
.panel-tabs .active{color:#1d2333}
.panel-tabs .active::after{content:"";position:absolute;left:12px;right:12px;bottom:0;height:2px;border-radius:2px 2px 0 0;background:#ff5050}

/* right side */
.files{flex:none;height:496px;border-bottom:1px solid #ebecf0}
.right-head{display:flex;align-items:center;gap:9px;height:43px;padding:10px 13px 0 16px}
.right-head h2{margin-right:auto;font-weight:500}
.project{padding-left:12px}
.file{padding-left:42px;gap:5px}
.vars{flex:1;min-height:0;display:flex;flex-direction:column;padding-bottom:7px}
.vars .right-head{height:44px;padding:10px 16px 0;gap:10px}
.var-box{flex:1;margin:0 16px;border:1px solid #e6e8ed;border-radius:4px;overflow:hidden}
.var-box table{width:100%;border-collapse:collapse;background:#f3f4f6}
.var-box th{height:25px;padding:1px 7px 0;text-align:left;font-weight:400;border-bottom:1px solid #e6e8ed}
.var-box th:first-child{width:147px;border-right:1px solid #e6e8ed}

/* taskbar */
.taskbar{height:40px;flex:none;display:flex;background:#03151a;color:#fff}
.app{position:relative;width:48px;display:flex;align-items:center;justify-content:center;margin-right:1px}
.start{margin-right:0}
.ie{width:58px;padding-left:3px}
.on::after{content:"";position:absolute;left:4px;right:4px;bottom:0;height:2px;background:#76b9ed}
.alert{background:#9b5c26}
.current{background:#3a464b}
.alert::after{left:0;right:0;background:#ff7a00}
.current::after{left:0;right:0}
.tray{margin-left:auto;display:flex;align-items:center;gap:8px}
.stat{display:flex;flex-direction:column;align-items:center;margin-right:7px}
.clock{margin:0 0 0 2px}
.ime{width:16px;text-align:center}
.desktop{width:5px;height:40px;border-left:1px solid #5a666a}
```
